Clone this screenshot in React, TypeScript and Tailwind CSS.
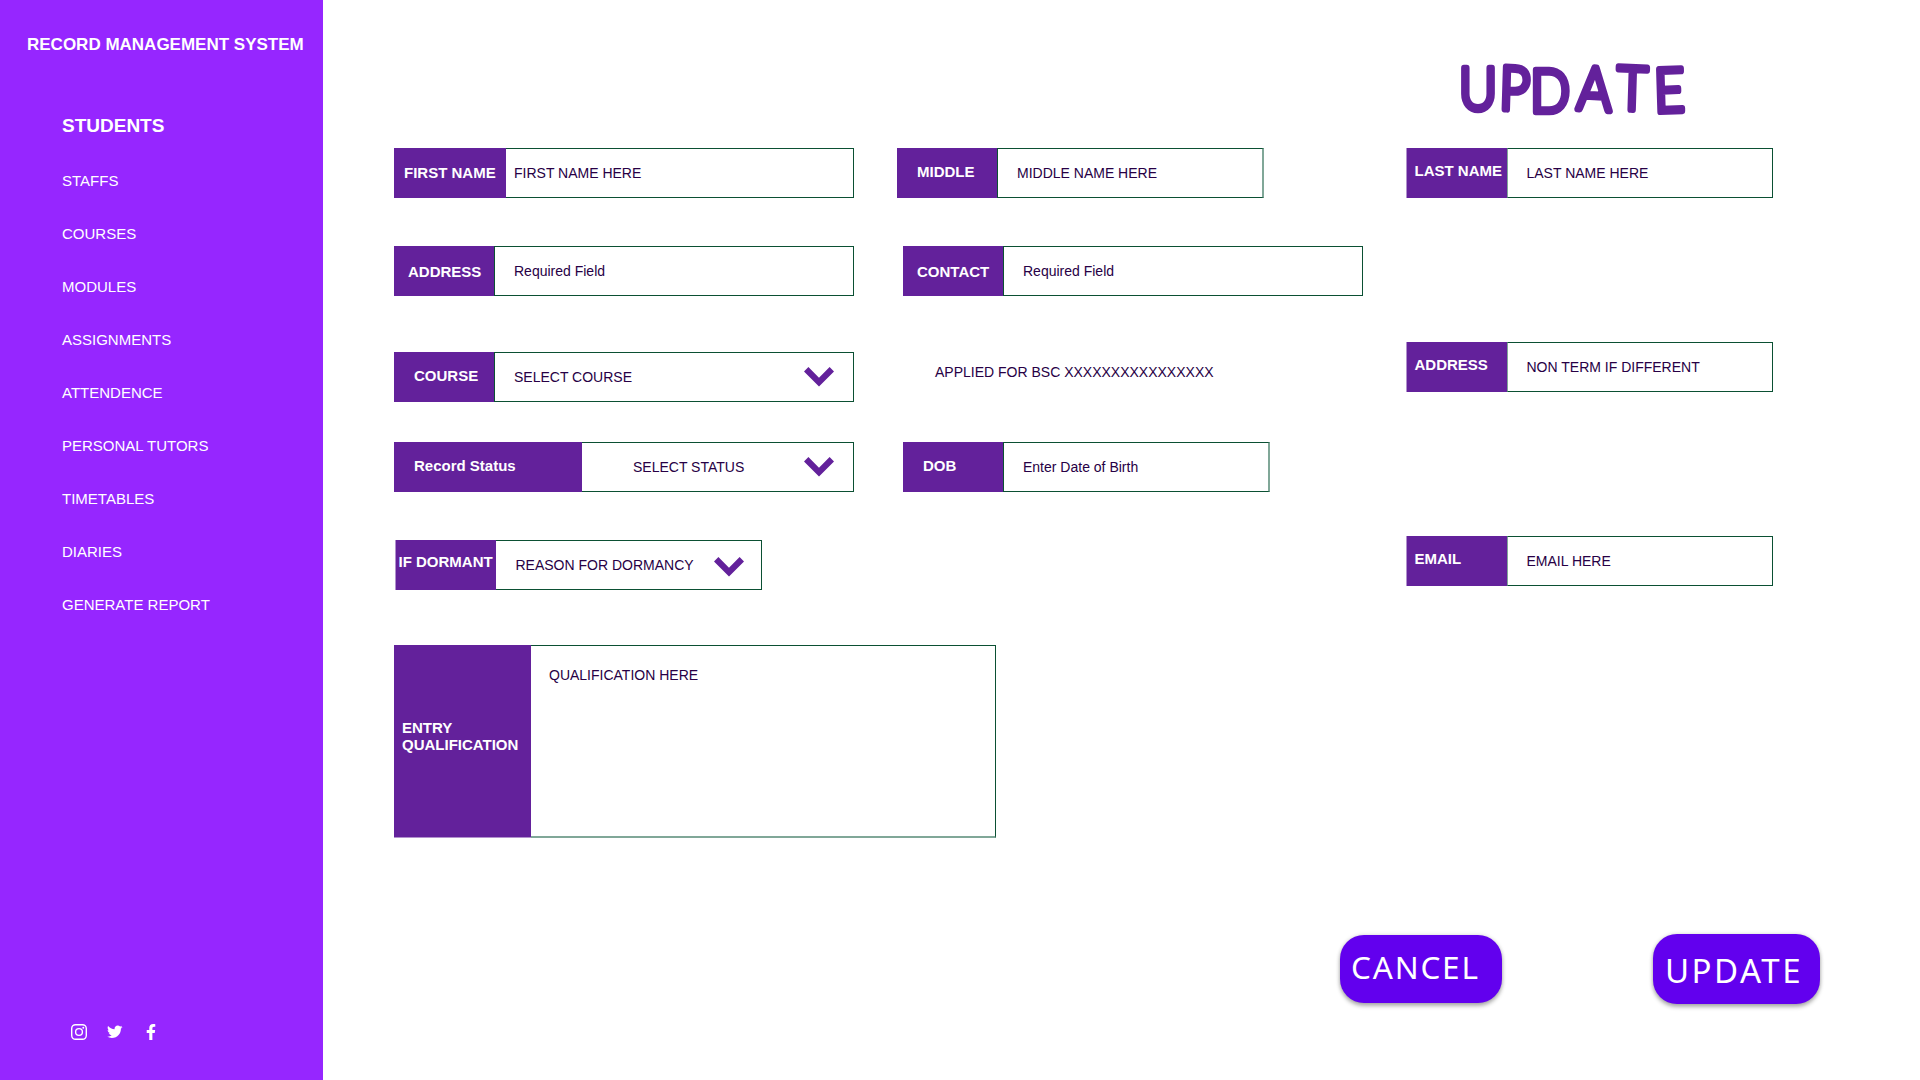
import type { ReactNode } from "react";
import { FaFacebookF, FaTwitter } from "react-icons/fa";

const navItems = [
  "STAFFS",
  "COURSES",
  "MODULES",
  "ASSIGNMENTS",
  "ATTENDENCE",
  "PERSONAL TUTORS",
  "TIMETABLES",
  "DIARIES",
  "GENERATE REPORT",
];

function Chevron({ className }: { className: string }) {
  return (
    <svg viewBox="0 0 30 20" className={`h-5 w-[30px] shrink-0 fill-[#63219b] ${className}`}>
      <path d="M0 4.4 4.4 0 15 10.7 25.6 0 30 4.4 15 19.5Z" />
    </svg>
  );
}

type FieldProps = {
  label: ReactNode;
  value: string;
  className: string;
  labelClass: string;
  valueClass: string;
  chevronClass?: string;
};

function Field({ label, value, className, labelClass, valueClass, chevronClass }: FieldProps) {
  return (
    <div className={`flex shrink-0 ${className}`}>
      <div className={`shrink-0 bg-[#63219b] text-[15px] leading-[17px] font-bold whitespace-nowrap text-white ${labelClass}`}>
        {label}
      </div>
      <div className={`flex grow items-start justify-between border-[#0b5033] text-[14px] leading-4 whitespace-nowrap text-[#270045] ${valueClass}`}>
        <span>{value}</span>
        {chevronClass && <Chevron className={chevronClass} />}
      </div>
    </div>
  );
}

function Instagram() {
  return (
    <svg viewBox="0 0 16 16" className="size-4" fill="none" stroke="white" strokeWidth="1.4">
      <rect x="0.7" y="0.7" width="14.6" height="14.6" rx="3.8" />
      <circle cx="8" cy="8" r="3.4" />
      <circle cx="12.3" cy="3.7" r="0.95" fill="white" stroke="none" />
    </svg>
  );
}

function Sidebar() {
  return (
    <aside className="flex h-full w-[323px] shrink-0 flex-col bg-[#9626ff] text-white">
      <h2 className="mt-[35px] ml-[27px] text-[17px] leading-5 font-bold whitespace-nowrap">RECORD MANAGEMENT SYSTEM</h2>
      <nav className="mt-[60px] ml-[62px] flex flex-col">
        <a className="text-[19px] leading-[22px] font-bold">STUDENTS</a>
        <div className="mt-[35px] flex flex-col gap-9">
          {navItems.map((item) => (
            <a key={item} className="text-[15px] leading-[17px]">{item}</a>
          ))}
        </div>
      </nav>
      <div className="mt-auto mb-10 ml-[71px] flex h-4 items-center">
        <Instagram />
        <FaTwitter className="ml-5 size-[15.5px]" />
        <FaFacebookF className="ml-5 size-4" />
      </div>
    </aside>
  );
}

function Title() {
  return (
    <svg
      viewBox="0 -18 260 98"
      className="ml-[46px] h-[98px] w-[260px] overflow-visible fill-[#63219b] stroke-[#63219b] font-['Lato'] text-[60px] font-light"
      strokeWidth="6.6"
      strokeLinejoin="round"
    >
      <text
        transform="scale(0.87 1)"
        x="8 54 90 143 189 233"
        y="52 51 54 51 51 54"
        rotate="0 2 0 3 2 -2"
      >
        UPDATE
      </text>
    </svg>
  );
}

export default function App() {
  return (
    <div className="flex h-[1080px] w-[1920px] overflow-hidden bg-white font-['Liberation_Sans',Arial,sans-serif]">
      <Sidebar />
      <main className="flex grow flex-col">
        <div className="flex h-[900px]">
          <section className="ml-[71px] flex w-[503px] flex-col pt-[148px]">
            <Field label="FIRST NAME" value="FIRST NAME HERE" className="h-[50px] w-[460px]" labelClass="w-28 pt-4 pl-2.5" valueClass="border-y border-r pt-4 pl-2" />
            <Field label="ADDRESS" value="Required Field" className="mt-12 h-[50px] w-[460px]" labelClass="w-[100px] pt-[17px] pl-3.5" valueClass="border pt-4 pl-[19px]" />
            <Field label="COURSE" value="SELECT COURSE" className="mt-14 h-[50px] w-[460px]" labelClass="w-[100px] pt-[15px] pl-5" valueClass="border pt-4 pl-[19px]" chevronClass="mr-[19px] -mt-0.5" />
            <Field label="Record Status" value="SELECT STATUS" className="mt-10 h-[50px] w-[460px]" labelClass="w-[188px] pt-[15px] pl-5" valueClass="border-y border-r pt-4 pl-[51px]" chevronClass="mr-[19px] -mt-0.5" />
            <Field label="IF DORMANT" value="REASON FOR DORMANCY" className="mt-12 ml-px h-[50px] w-[367px]" labelClass="w-[101px] border-l border-[#b190cd] pt-[13px] pl-[2.5px]" valueClass="border-y border-r pt-4 pl-[19.5px]" chevronClass="mr-[17px]" />
            <Field
              label={<>ENTRY<br />QUALIFICATION</>}
              value="QUALIFICATION HERE"
              className="mt-[55px] h-[193px] w-[602px]"
              labelClass="w-[137px] border-b border-[#b190cd] pt-[74px] pl-2"
              valueClass="border-t border-r border-b-2 border-b-[#80a798] pt-[21px] pl-[18px]"
            />
          </section>
          <section className="flex w-[509px] flex-col pt-[148px]">
            <Field label="MIDDLE" value="MIDDLE NAME HERE" className="h-[50px] w-[367px]" labelClass="w-[100px] pt-[15px] pl-5" valueClass="border border-r-2 border-r-[#80a798] pt-4 pl-[19px]" />
            <Field label="CONTACT" value="Required Field" className="mt-12 ml-1.5 h-[50px] w-[460px]" labelClass="w-[100px] pt-[17px] pl-3.5" valueClass="border pt-4 pl-[19px]" />
            <p className="mt-[68px] ml-[38px] text-[14px] leading-4 text-[#270045]">APPLIED FOR BSC XXXXXXXXXXXXXXXX</p>
            <Field label="DOB" value="Enter Date of Birth" className="mt-[62px] ml-1.5 h-[50px] w-[367px]" labelClass="w-[100px] pt-[15px] pl-5" valueClass="border border-r-2 border-r-[#80a798] pt-4 pl-[19px]" />
          </section>
          <section className="flex flex-col pt-10">
            <h1><Title /></h1>
            <Field label="LAST NAME" value="LAST NAME HERE" className="mt-2.5 h-[50px] w-[367px]" labelClass="w-[101px] border-l border-[#b190cd] pt-3.5 pl-[7.5px]" valueClass="border border-l-[#80a798] pt-4 pl-[18.5px]" />
            <Field label="ADDRESS" value="NON TERM IF DIFFERENT" className="mt-36 h-[50px] w-[367px]" labelClass="w-[101px] border-l border-[#b190cd] pt-3.5 pl-[7.5px]" valueClass="border border-l-[#80a798] pt-4 pl-[18.5px]" />
            <Field label="EMAIL" value="EMAIL HERE" className="mt-36 h-[50px] w-[367px]" labelClass="w-[101px] border-l border-[#b190cd] pt-3.5 pl-[7.5px]" valueClass="border border-l-[#80a798] pt-4 pl-[18.5px]" />
          </section>
        </div>
        <div className="mt-[34px] ml-[1017px] flex items-start gap-[151px] font-['Noto_Sans','Open_Sans',sans-serif] text-white">
          <button className="mt-px h-[68px] w-[162px] rounded-3xl bg-[#6200ee] pb-1 pl-[11px] text-left text-[31.5px] leading-[64px] tracking-[1.8px] shadow-[0_3px_4px_rgba(0,0,0,0.3),0_0_4px_rgba(0,0,0,0.15)]">CANCEL</button>
          <button className="h-[70px] w-[167px] rounded-3xl bg-[#6200ee] pt-1 pl-3 text-left text-[33px] leading-[66px] tracking-[2.5px] shadow-[0_3px_4px_rgba(0,0,0,0.3),0_0_4px_rgba(0,0,0,0.15)]">UPDATE</button>
        </div>
      </main>
    </div>
  );
}
